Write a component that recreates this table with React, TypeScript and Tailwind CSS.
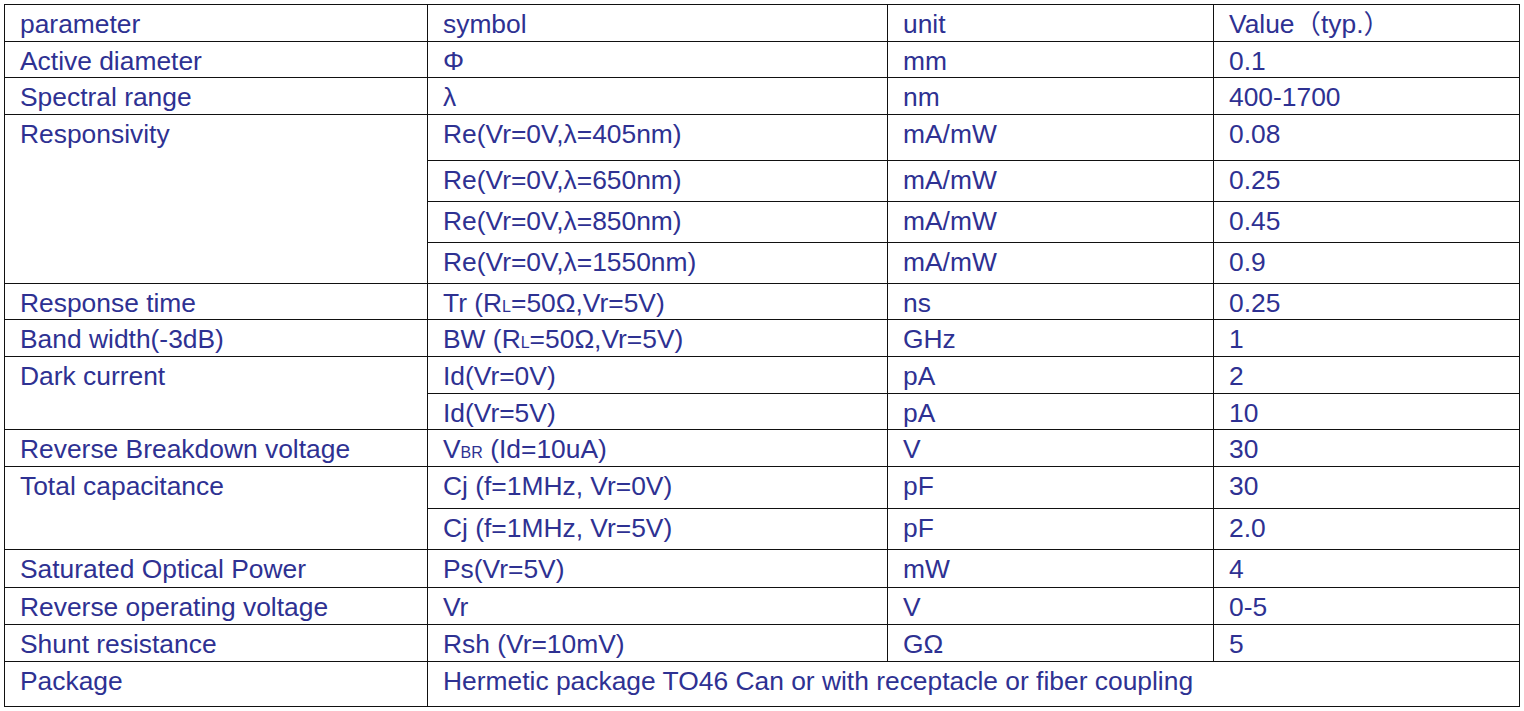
import React from 'react'

type Cell = {
  text: React.ReactNode
  col: string
  row: string
}

const L = <span className="text-[16px] leading-none">L</span>

const cells: Cell[] = [
  // header
  { text: 'parameter', col: 'col-start-1', row: 'row-start-1' },
  { text: 'symbol', col: 'col-start-2', row: 'row-start-1' },
  { text: 'unit', col: 'col-start-3', row: 'row-start-1' },
  { text: 'Value（typ.）', col: 'col-start-4', row: 'row-start-1' },

  { text: 'Active diameter', col: 'col-start-1', row: 'row-start-2' },
  { text: 'Φ', col: 'col-start-2', row: 'row-start-2' },
  { text: 'mm', col: 'col-start-3', row: 'row-start-2' },
  { text: '0.1', col: 'col-start-4', row: 'row-start-2' },

  { text: 'Spectral range', col: 'col-start-1', row: 'row-start-3' },
  { text: 'λ', col: 'col-start-2', row: 'row-start-3' },
  { text: 'nm', col: 'col-start-3', row: 'row-start-3' },
  { text: '400-1700', col: 'col-start-4', row: 'row-start-3' },

  { text: 'Responsivity', col: 'col-start-1', row: 'row-start-4 row-span-4' },
  { text: 'Re(Vr=0V,λ=405nm)', col: 'col-start-2', row: 'row-start-4' },
  { text: 'mA/mW', col: 'col-start-3', row: 'row-start-4' },
  { text: '0.08', col: 'col-start-4', row: 'row-start-4' },
  { text: 'Re(Vr=0V,λ=650nm)', col: 'col-start-2', row: 'row-start-5' },
  { text: 'mA/mW', col: 'col-start-3', row: 'row-start-5' },
  { text: '0.25', col: 'col-start-4', row: 'row-start-5' },
  { text: 'Re(Vr=0V,λ=850nm)', col: 'col-start-2', row: 'row-start-6' },
  { text: 'mA/mW', col: 'col-start-3', row: 'row-start-6' },
  { text: '0.45', col: 'col-start-4', row: 'row-start-6' },
  { text: 'Re(Vr=0V,λ=1550nm)', col: 'col-start-2', row: 'row-start-7' },
  { text: 'mA/mW', col: 'col-start-3', row: 'row-start-7' },
  { text: '0.9', col: 'col-start-4', row: 'row-start-7' },

  { text: 'Response time', col: 'col-start-1', row: 'row-start-8' },
  { text: <>Tr (R{L}=50Ω,Vr=5V)</>, col: 'col-start-2', row: 'row-start-8' },
  { text: 'ns', col: 'col-start-3', row: 'row-start-8' },
  { text: '0.25', col: 'col-start-4', row: 'row-start-8' },

  { text: 'Band width(-3dB)', col: 'col-start-1', row: 'row-start-9' },
  { text: <>BW (R{L}=50Ω,Vr=5V)</>, col: 'col-start-2', row: 'row-start-9' },
  { text: 'GHz', col: 'col-start-3', row: 'row-start-9' },
  { text: '1', col: 'col-start-4', row: 'row-start-9' },

  { text: 'Dark current', col: 'col-start-1', row: 'row-start-10 row-span-2' },
  { text: 'Id(Vr=0V)', col: 'col-start-2', row: 'row-start-10' },
  { text: 'pA', col: 'col-start-3', row: 'row-start-10' },
  { text: '2', col: 'col-start-4', row: 'row-start-10' },
  { text: 'Id(Vr=5V)', col: 'col-start-2', row: 'row-start-11' },
  { text: 'pA', col: 'col-start-3', row: 'row-start-11' },
  { text: '10', col: 'col-start-4', row: 'row-start-11' },

  { text: 'Reverse Breakdown voltage', col: 'col-start-1', row: 'row-start-12' },
  {
    text: (
      <>
        V<span className="text-[16px] leading-none">BR</span> (Id=10uA)
      </>
    ),
    col: 'col-start-2',
    row: 'row-start-12',
  },
  { text: 'V', col: 'col-start-3', row: 'row-start-12' },
  { text: '30', col: 'col-start-4', row: 'row-start-12' },

  { text: 'Total capacitance', col: 'col-start-1', row: 'row-start-13 row-span-2' },
  { text: 'Cj (f=1MHz, Vr=0V)', col: 'col-start-2', row: 'row-start-13' },
  { text: 'pF', col: 'col-start-3', row: 'row-start-13' },
  { text: '30', col: 'col-start-4', row: 'row-start-13' },
  { text: 'Cj (f=1MHz, Vr=5V)', col: 'col-start-2', row: 'row-start-14' },
  { text: 'pF', col: 'col-start-3', row: 'row-start-14' },
  { text: '2.0', col: 'col-start-4', row: 'row-start-14' },

  { text: 'Saturated Optical Power', col: 'col-start-1', row: 'row-start-15' },
  { text: 'Ps(Vr=5V)', col: 'col-start-2', row: 'row-start-15' },
  { text: 'mW', col: 'col-start-3', row: 'row-start-15' },
  { text: '4', col: 'col-start-4', row: 'row-start-15' },

  { text: 'Reverse operating voltage', col: 'col-start-1', row: 'row-start-16' },
  { text: 'Vr', col: 'col-start-2', row: 'row-start-16' },
  { text: 'V', col: 'col-start-3', row: 'row-start-16' },
  { text: '0-5', col: 'col-start-4', row: 'row-start-16' },

  { text: 'Shunt resistance', col: 'col-start-1', row: 'row-start-17' },
  { text: 'Rsh (Vr=10mV)', col: 'col-start-2', row: 'row-start-17' },
  { text: 'GΩ', col: 'col-start-3', row: 'row-start-17' },
  { text: '5', col: 'col-start-4', row: 'row-start-17' },

  { text: 'Package', col: 'col-start-1', row: 'row-start-18' },
  {
    text: 'Hermetic package TO46 Can or with receptacle or fiber coupling',
    col: 'col-start-2 col-span-3',
    row: 'row-start-18',
  },
]

export default function App() {
  return (
    <div className="w-[1524px] h-[711px] bg-white overflow-hidden pt-[4px] pl-[4px]">
      <div
        className="grid grid-cols-[423px_460px_326px_306px] grid-rows-[37px_36px_37px_46px_41px_41px_41px_36px_37px_37px_36px_37px_42px_41px_38px_37px_37px_45px] w-fit border-l border-t border-[#111] text-[26.4px] leading-[30px] text-[#2e3192] font-['Liberation_Sans','Noto_Sans_CJK_SC',sans-serif]"
      >
        {cells.map((c, i) => (
          <div
            key={i}
            className={`${c.col} ${c.row} border-r border-b border-[#111] pl-[15px] pt-[4px] whitespace-nowrap`}
          >
            {c.text}
          </div>
        ))}
      </div>
    </div>
  )
}
